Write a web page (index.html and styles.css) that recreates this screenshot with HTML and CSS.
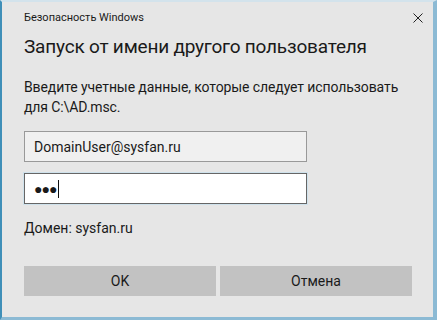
FILE: index.html
```html
<!DOCTYPE html>
<html lang="ru">
  <head>
    <meta charset="UTF-8" />
    <meta name="viewport" content="width=device-width, initial-scale=1.0" />
    <title>Безопасность Windows</title>
    <link rel="stylesheet" href="styles.css">
  </head>
  <body>
    <div class="window">
      <div class="titlebar">
        <span class="caption">Безопасность Windows</span>
        <svg class="close" width="10" height="10" viewBox="0 0 10 10">
          <path d="M0.5 0.5 L9.5 9.5 M9.5 0.5 L0.5 9.5" stroke="#222" stroke-width="1" fill="none" />
        </svg>
      </div>
      <h1>Запуск от имени другого пользователя</h1>
      <p class="message">Введите учетные данные, которые следует использовать для C:\AD.msc.</p>
      <form class="credentials">
        <input class="field" type="text" value="DomainUser@sysfan.ru" />
        <div class="field password">
          <span class="dots">●●●</span><span class="caret"></span>
        </div>
        <div class="domain">Домен: sysfan.ru</div>
        <div class="buttons">
          <button type="submit">OK</button>
          <button type="button">Отмена</button>
        </div>
      </form>
    </div>
  </body>
</html>
```

FILE: styles.css
```css
html,
body {
  margin: 0;
  height: 100%;
  background-color: #4a95bf;
}

body {
  font-family: Roboto, "Noto Sans", sans-serif;
  color: #1a1a1a;
}

.window {
  box-sizing: border-box;
  width: 437px;
  height: 320px;
  background-color: #e6e6e6;
  border-left: 2px solid #3f8fb8;
  border-top: 2px solid #d3e3ec;
  border-right: 4px solid #8cbad4;
  border-bottom: 3px solid #8cbad4;
  padding: 0 22px;
}

.titlebar {
  display: flex;
  justify-content: space-between;
  align-items: center;
  height: 30px;
  font-size: 11px;
}

.close {
  margin-right: -12px;
  margin-top: 1px;
}

h1 {
  font-size: 19px;
  font-weight: normal;
  letter-spacing: -0.2px;
  margin: 1px 0 0;
  line-height: 28px;
}

.message {
  font-size: 14px;
  line-height: 20px;
  letter-spacing: -0.1px;
  margin: 16px 0 0;
  width: 400px;
}

.credentials {
  margin-top: 14px;
  width: 283px;
}

.field {
  display: block;
  box-sizing: border-box;
  width: 283px;
  height: 31px;
  margin: 0;
  padding: 0 9px;
  border: 1px solid #999;
  background-color: #f0f0f0;
  font-family: inherit;
  font-size: 14px;
  color: #1a1a1a;
}

.password {
  display: flex;
  align-items: center;
  margin-top: 11px;
  background-color: #fff;
  border-color: #666;
  box-shadow: 0 0 0 1px #cfe2ec;
}

.dots {
  font-size: 14px;
  letter-spacing: -1px;
}

.caret {
  width: 1px;
  height: 18px;
  margin-left: 2px;
  background-color: #111;
}

.domain {
  font-size: 14px;
  margin-top: 14px;
  line-height: 20px;
}

.buttons {
  display: flex;
  gap: 4px;
  margin-top: 28px;
  width: 388px;
}

button {
  flex: 1;
  height: 30px;
  border: none;
  background-color: #c2c2c2;
  font-family: inherit;
  font-size: 14px;
  color: #1a1a1a;
}
```
